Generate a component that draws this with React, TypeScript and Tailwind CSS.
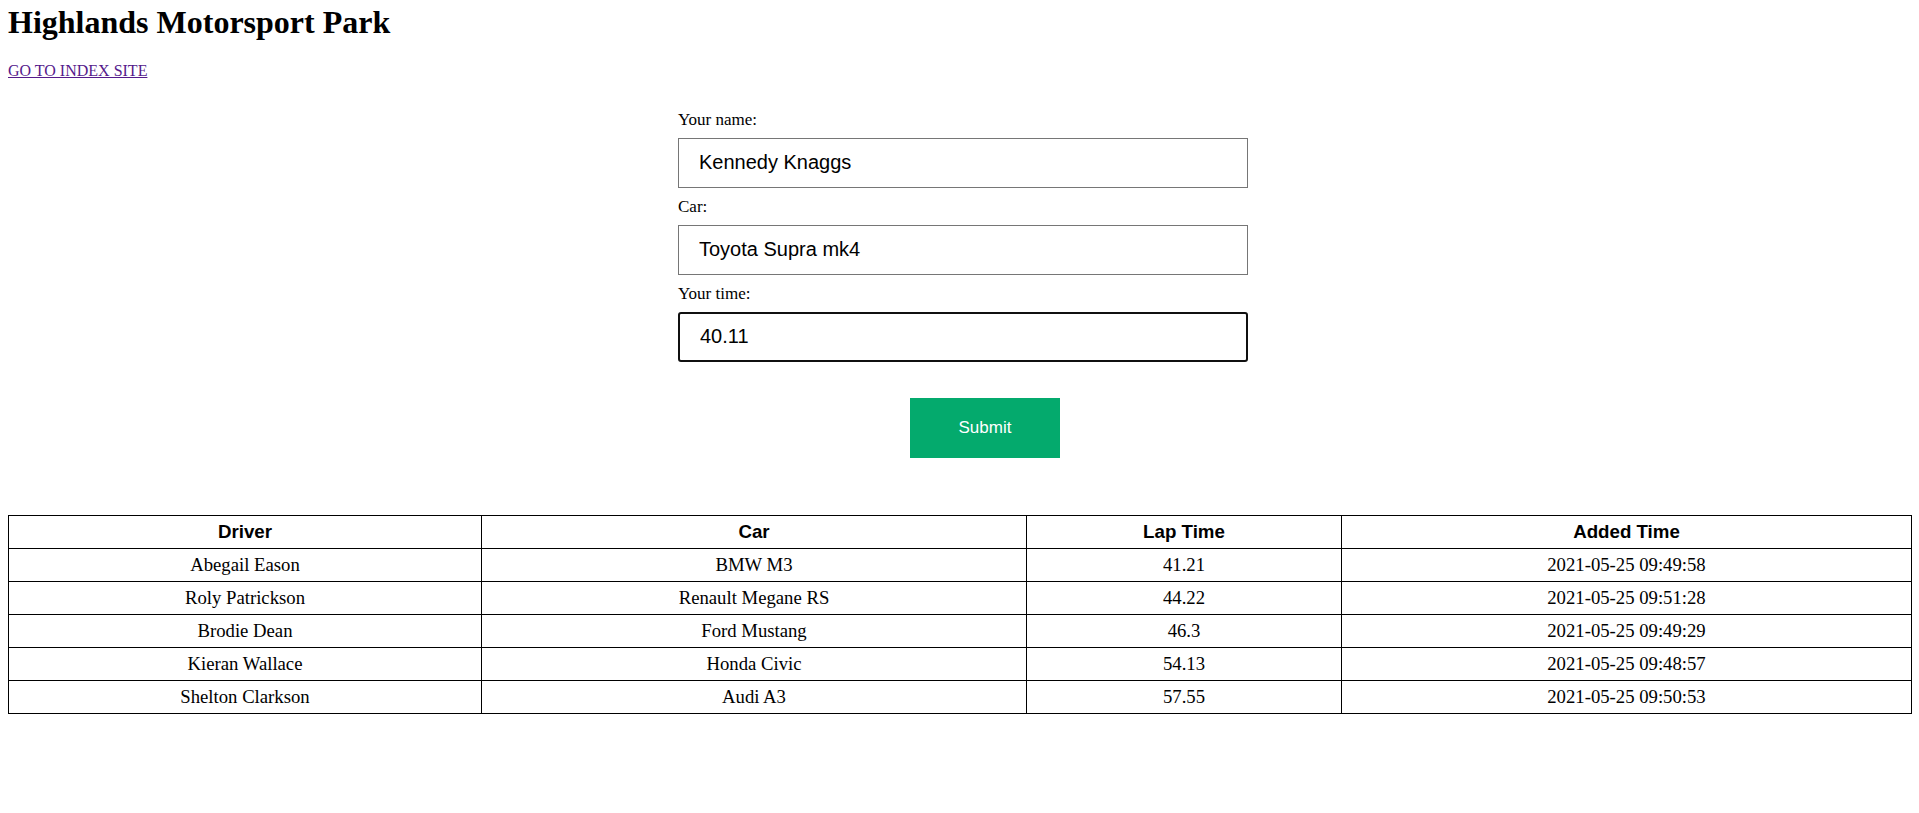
import React from "react";

const LAPS = [
  { driver: "Abegail Eason", car: "BMW M3", lap: "41.21", added: "2021-05-25 09:49:58" },
  { driver: "Roly Patrickson", car: "Renault Megane RS", lap: "44.22", added: "2021-05-25 09:51:28" },
  { driver: "Brodie Dean", car: "Ford Mustang", lap: "46.3", added: "2021-05-25 09:49:29" },
  { driver: "Kieran Wallace", car: "Honda Civic", lap: "54.13", added: "2021-05-25 09:48:57" },
  { driver: "Shelton Clarkson", car: "Audi A3", lap: "57.55", added: "2021-05-25 09:50:53" },
];

const inputBase =
  "block w-full h-[50px] my-[9px] px-[20px] font-['Liberation_Sans',Arial,sans-serif] text-[20px] text-black bg-white outline-none";

export default function App() {
  return (
    <div className="min-h-screen bg-white px-[8px] font-['Liberation_Serif','Times_New_Roman',serif] text-[16px] text-black">
      <h1 className="pt-[4px] mb-[21.44px] text-[32px] leading-[36.8px] font-bold">
        Highlands Motorsport Park
      </h1>
      <a href="#" className="block w-fit leading-[18.4px] text-[#551a8b] underline">
        GO TO INDEX SITE
      </a>

      <form
        className="mt-[29px] ml-[670px] w-[570px] flex flex-col"
        onSubmit={(e) => e.preventDefault()}
      >
        <label className="block text-[17px] leading-[19px]">Your name:</label>
        <input
          type="text"
          defaultValue="Kennedy Knaggs"
          className={`${inputBase} border border-[#767676]`}
        />
        <label className="block text-[17px] leading-[19px]">Car:</label>
        <input
          type="text"
          defaultValue="Toyota Supra mk4"
          className={`${inputBase} border border-[#767676]`}
        />
        <label className="block text-[17px] leading-[19px]">Your time:</label>
        <input
          type="text"
          defaultValue="40.11"
          className={`${inputBase} border-2 border-[#101010] rounded-[3px] px-[19px]`}
        />
        <button
          type="submit"
          className="self-start ml-[232px] mt-[27px] w-[150px] h-[60px] bg-[#04aa6d] text-white font-['Liberation_Sans',Arial,sans-serif] text-[17px] border-none cursor-pointer"
        >
          Submit
        </button>
      </form>

      <table className="mt-[57px] w-full table-fixed border-collapse border border-black text-[18.72px]">
        <colgroup>
          <col className="w-[473px]" />
          <col className="w-[545px]" />
          <col className="w-[315px]" />
          <col className="w-[570px]" />
        </colgroup>
        <thead>
          <tr>
            {["Driver", "Car", "Lap Time", "Added Time"].map((h) => (
              <th
                key={h}
                className="border border-black py-[5px] px-[1px] leading-[22px] text-center font-bold font-['Liberation_Sans',Arial,sans-serif]"
              >
                {h}
              </th>
            ))}
          </tr>
        </thead>
        <tbody>
          {LAPS.map((r) => (
            <tr key={r.driver}>
              <td className="border border-black py-[5px] px-[1px] leading-[22px] text-center">{r.driver}</td>
              <td className="border border-black py-[5px] px-[1px] leading-[22px] text-center">{r.car}</td>
              <td className="border border-black py-[5px] px-[1px] leading-[22px] text-center">{r.lap}</td>
              <td className="border border-black py-[5px] px-[1px] leading-[22px] text-center">{r.added}</td>
            </tr>
          ))}
        </tbody>
      </table>
    </div>
  );
}
